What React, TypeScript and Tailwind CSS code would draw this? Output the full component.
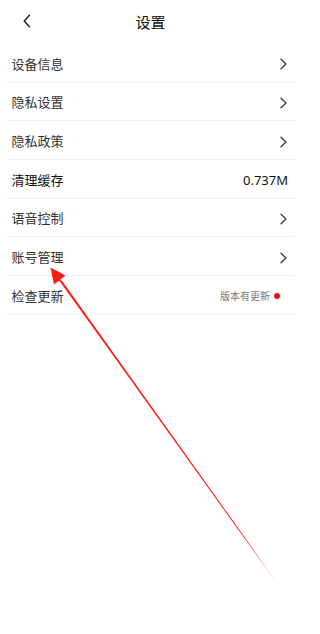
import React from "react";

const Chevron = () => (
  <svg width="9" height="12" viewBox="0 0 9 12" className="shrink-0">
    <path d="M2 1.2 L7 6 L2 10.8" fill="none" stroke="#3a3a3a" strokeWidth="1.3" strokeLinecap="round" strokeLinejoin="round" />
  </svg>
);

type Row = { label: string; right: "chevron" | "size" | "update"; dark?: boolean };

const rows: Row[] = [
  { label: "设备信息", right: "chevron" },
  { label: "隐私设置", right: "chevron" },
  { label: "隐私政策", right: "chevron" },
  { label: "清理缓存", right: "size", dark: true },
  { label: "语音控制", right: "chevron" },
  { label: "账号管理", right: "chevron" },
  { label: "检查更新", right: "update" },
];

export default function App() {
  return (
    <div
      className="relative w-[301px] h-[634px] bg-white overflow-hidden"
      style={{ fontFamily: '"Noto Sans", "Noto Sans CJK SC", sans-serif' }}
    >
      <div className="relative h-[44px] flex items-center justify-center">
        <svg width="10" height="14" viewBox="0 0 10 14" className="absolute left-[22px] top-[14px]">
          <path d="M7.5 1.2 L2.2 7 L7.5 12.8" fill="none" stroke="#222" strokeWidth="1.5" strokeLinecap="round" strokeLinejoin="round" />
        </svg>
        <span className="text-[15px] text-[#111] leading-none">设置</span>
      </div>
      <div className="mx-[7px]">
        {rows.map((r) => (
          <div
            key={r.label}
            className="h-[38.67px] flex items-center justify-between border-b border-[#f0f0f0] pl-[4.5px] pt-[3px]"
          >
            <span className={`text-[13px] leading-none ${r.dark ? "text-[#111]" : "text-[#333]"}`}>{r.label}</span>
            {r.right === "chevron" && (
              <div className="pr-[6px] flex items-center">
                <Chevron />
              </div>
            )}
            {r.right === "size" && (
              <span className="text-[13px] leading-none text-[#111] pr-[6px]">0.737M</span>
            )}
            {r.right === "update" && (
              <div className="flex items-center gap-[4px] pr-[14px]">
                <span className="text-[10px] leading-none text-[#777]">版本有更新</span>
                <span className="w-[6px] h-[6px] rounded-full bg-[#e8141c]" />
              </div>
            )}
          </div>
        ))}
      </div>
      <svg className="absolute inset-0 pointer-events-none" width="301" height="634" viewBox="0 0 301 634">
        <defs>
          <linearGradient id="fade" gradientUnits="userSpaceOnUse" x1="50" y1="267" x2="278" y2="584">
            <stop offset="0" stopColor="#ff1a12" />
            <stop offset="0.82" stopColor="#ff1a12" />
            <stop offset="1" stopColor="#ff1a12" stopOpacity="0" />
          </linearGradient>
        </defs>
        <polygon points="50.5,267.5 65.5,275.5 54,284.5" fill="#ff1a12" />
        <polygon points="57,277.5 62.5,281.5 278,584 277.4,584.2" fill="url(#fade)" />
      </svg>
    </div>
  );
}
